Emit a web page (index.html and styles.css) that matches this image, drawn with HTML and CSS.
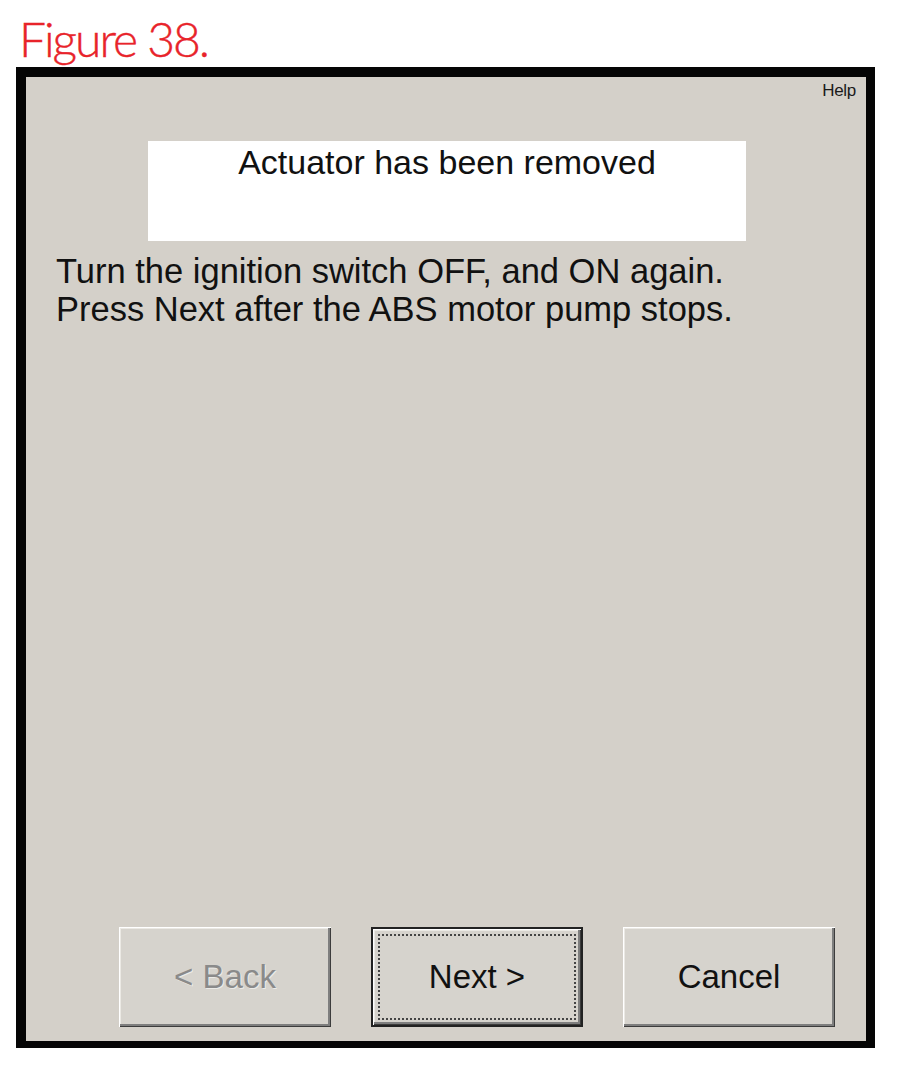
FILE: index.html
```html
<!DOCTYPE html>
<html lang="en">

<head>
    <meta charset="UTF-8">
    <meta name="viewport" content="width=device-width, initial-scale=1.0">
    <title>Figure 38</title>
    <link rel="stylesheet" href="styles.css">
</head>

<body>
    <div class="caption">Figure 38.</div>

    <div class="frame">
        <div class="dialog">
            <div class="help-row">
                <span class="help">Help</span>
            </div>

            <div class="status-box">Actuator has been removed</div>

            <p class="message">
                Turn the ignition switch OFF, and ON again.<br>
                Press Next after the ABS motor pump stops.
            </p>

            <div class="buttons">
                <button class="btn disabled" disabled><span class="label">&lt; Back</span></button>
                <button class="btn default"><span class="label">Next &gt;</span></button>
                <button class="btn"><span class="label">Cancel</span></button>
            </div>
        </div>
    </div>
</body>

</html>
```

FILE: styles.css
```css
* {
    margin: 0;
    padding: 0;
    box-sizing: border-box;
}

body {
    background: #fff;
    font-family: 'Liberation Sans', Arial, sans-serif;
    color: #111;
    width: 900px;
    height: 1068px;
}

.caption {
    height: 67px;
    padding: 15px 0 0 19px;
    font-family: 'Lato', 'DejaVu Sans', sans-serif;
    font-weight: 300;
    font-size: 48px;
    line-height: 1;
    color: #e8232a;
    letter-spacing: -2px;
    -webkit-text-stroke: 0.4px #e8232a;
}

.frame {
    margin-left: 16px;
    width: 859px;
    height: 981px;
    border-style: solid;
    border-color: #050505;
    border-width: 10px 9px 7px 10px;
}

.dialog {
    height: 100%;
    background: #d4d0c9;
    display: flex;
    flex-direction: column;
}

.help-row {
    display: flex;
    justify-content: flex-end;
    padding: 4px 10px 0 0;
    height: 64px;
}

.help {
    font-size: 17px;
    color: #1a1a1a;
    letter-spacing: -0.3px;
}

.status-box {
    margin-left: 122px;
    width: 598px;
    height: 100px;
    background: #fff;
    text-align: center;
    font-size: 34px;
    line-height: 39px;
    padding-top: 2px;
}

.message {
    margin: 11px 0 0 30px;
    font-size: 34.5px;
    line-height: 38px;
}

.buttons {
    margin-top: auto;
    display: flex;
    justify-content: flex-end;
    gap: 40px;
    padding: 0 31px 14px 0;
}

.btn {
    width: 212px;
    height: 100px;
    display: flex;
    font-family: 'Liberation Sans', Arial, sans-serif;
    font-size: 33px;
    color: #111;
    background: #d6d3cd;
    border: none;
    box-shadow: inset 1px 1px #fff, inset -1px -1px #3c3c3c, inset -3px -3px #7e7e7e, inset 2px 2px #ebe9e4;
}

.label {
    flex: 1;
    margin: 6px;
    display: flex;
    align-items: center;
    justify-content: center;
    border: 1px dotted transparent;
}

.btn.default {
    border: 2px solid #222;
}

.btn.default .label {
    margin: 5px;
    border: 2px dotted #444;
}

.btn.disabled {
    color: #8a8a8a;
    text-shadow: 1px 1px #ecebe8;
}
```
